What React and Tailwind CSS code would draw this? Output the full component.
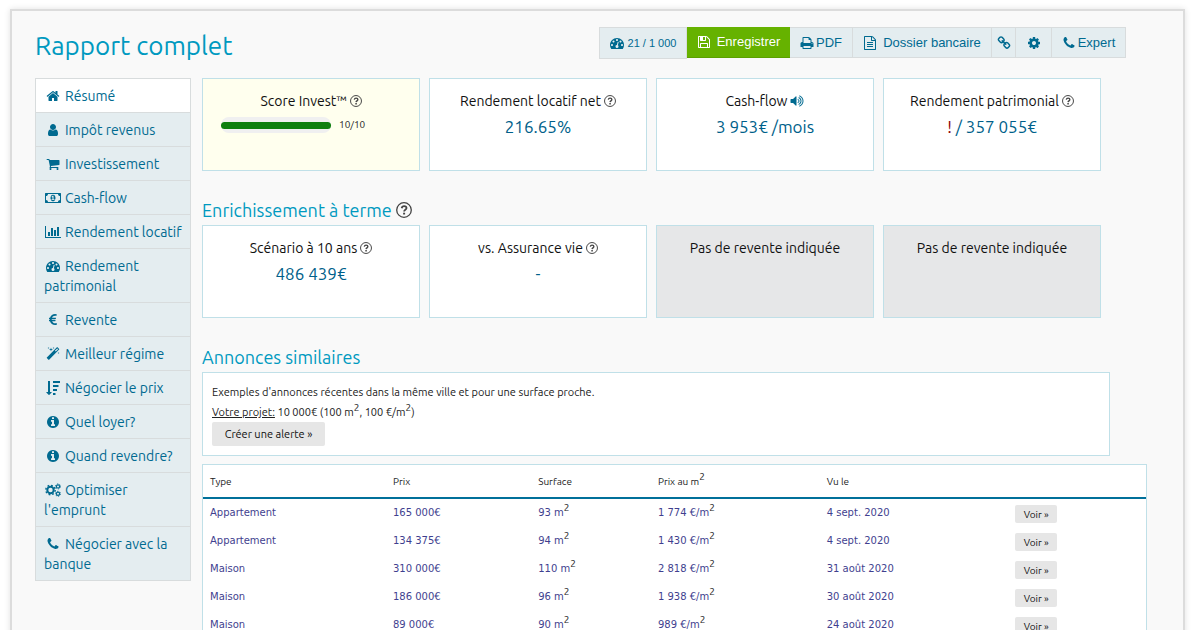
import React from 'react';

// Glyph outlines on a 1792 grid, w is the viewBox width
const ICONS = {
  home: {
    w: 1792,
    d: 'M1472 992v480q0 26-19 45t-45 19h-384v-384h-256v384h-384q-26 0-45-19t-19-45v-480q0-1 .5-3t.5-3l575-474 575 474q1 2 1 6zm223-69l-62 74q-8 9-21 11h-3q-13 0-21-7l-692-577-692 577q-12 8-24 7-13-2-21-11l-62-74q-8-10-7-23.5t11-21.5l719-599q32-26 76-26t76 26l244 204v-195q0-14 9-23t23-9h192q14 0 23 9t9 23v408l219 182q10 8 11 21.5t-7 23.5z'
  },
  user: {
    w: 1792,
    d: 'M1536 1399q0 109-62.5 187t-150.5 78h-854q-88 0-150.5-78t-62.5-187q0-85 8.5-160.5t31.5-152 58.5-131 94-89 134.5-34.5q131 128 313 128t313-128q76 0 134.5 34.5t94 89 58.5 131 31.5 152 8.5 160.5zm-256-887q0 159-112.5 271.5t-271.5 112.5-271.5-112.5-112.5-271.5 112.5-271.5 271.5-112.5 271.5 112.5 112.5 271.5z'
  },
  cart: {
    w: 1792,
    d: 'M704 1536q0 52-38 90t-90 38-90-38-38-90 38-90 90-38 90 38 38 90zm896 0q0 52-38 90t-90 38-90-38-38-90 38-90 90-38 90 38 38 90zm128-1088v512q0 24-16.5 42.5t-40.5 21.5l-1044 122q13 60 13 70 0 16-24 64h920q26 0 45 19t19 45-19 45-45 19h-1024q-26 0-45-19t-19-45q0-11 8-31.5t16-36 21.5-40 15.5-29.5l-177-823h-204q-26 0-45-19t-19-45 19-45 45-19h256q16 0 28.5 6.5t19.5 15.5 13 24.5 8 26 5.5 29.5 4.5 26h1201q26 0 45 19t19 45z'
  },
  money: {
    w: 2048,
    d: 'M832 1152h384v-96h-128v-448h-114l-148 137 77 80q42-37 55-57h2v288h-128v96zm512-256q0 70-21 142t-59.5 134-101.5 101-138 39-138-39-101.5-101-59.5-134-21-142 21-142 59.5-134 101.5-101 138-39 138 39 101.5 101 59.5 134 21 142zm576 256v-512q-106 0-181-75t-75-181h-1280q0 106-75 181t-181 75v512q106 0 181 75t75 181h1280q0-106 75-181t181-75zm128-832v1152q0 26-19 45t-45 19h-1920q-26 0-45-19t-19-45v-1152q0-26 19-45t45-19h1920q26 0 45 19t19 45z'
  },
  chart: {
    w: 2048,
    d: 'M640 896v512h-256v-512h256zm384-512v1024h-256v-1024h256zm1024 1152v128h-2048v-1536h128v1408h1920zm-640-896v768h-256v-768h256zm384-384v1152h-256v-1152h256z'
  },
  gauge: {
    w: 1792,
    d: 'M384 1152q0-53-37.5-90.5t-90.5-37.5-90.5 37.5-37.5 90.5 37.5 90.5 90.5 37.5 90.5-37.5 37.5-90.5zm192-448q0-53-37.5-90.5t-90.5-37.5-90.5 37.5-37.5 90.5 37.5 90.5 90.5 37.5 90.5-37.5 37.5-90.5zm428 481l101-382q6-26-7.5-48.5t-38.5-29.5-48 6.5-30 39.5l-101 382q-60 5-107 43.5t-63 98.5q-20 77 20 146t117 89 146-20 89-117q16-60-6-117t-72-91zm660-33q0-53-37.5-90.5t-90.5-37.5-90.5 37.5-37.5 90.5 37.5 90.5 90.5 37.5 90.5-37.5 37.5-90.5zm-640-640q0-53-37.5-90.5t-90.5-37.5-90.5 37.5-37.5 90.5 37.5 90.5 90.5 37.5 90.5-37.5 37.5-90.5zm448 192q0-53-37.5-90.5t-90.5-37.5-90.5 37.5-37.5 90.5 37.5 90.5 90.5 37.5 90.5-37.5 37.5-90.5zm320 448q0 261-141 483-19 29-54 29h-1402q-35 0-54-29-141-221-141-483 0-182 71-348t191-286 286-191 348-71 348 71 286 191 191 286 71 348z'
  },
  euro: {
    w: 1792,
    d: 'M1360 1307l35 159q3 12-3 22.5t-17 14.5l-5 1q-4 2-10.5 3.5t-16 4.5-21.5 5.5-25.5 5-30 5-33.5 4.5-36.5 3-38.5 1q-234 0-409-130.5t-238-351.5h-95q-13 0-22.5-9.5t-9.5-22.5v-113q0-13 9.5-22.5t22.5-9.5h66q-2-57 1-105h-67q-14 0-23-9t-9-23v-114q0-14 9-23t23-9h98q67-210 243.5-338t400.5-128q102 0 194 23 11 3 20 15 6 11 3 24l-43 159q-3 13-14 19.5t-24 2.5l-4-1q-4-1-11.5-2.5l-17.5-3.5-22.5-3.5-26-3-29-2.5-29.5-1q-126 0-226 64t-150 176h468q16 0 25 12 10 12 7 26l-24 114q-5 26-32 26h-488q-3 37 0 105h459q15 0 25 12 9 12 6 27l-24 112q-2 11-11 18.5t-20 7.5h-387q48 117 149.5 185.5t228.5 68.5q18 0 36-1.5t33.5-3.5 29.5-4.5 24.5-5 18.5-4.5l12-3 5-2q13-5 26 2 12 7 15 21z'
  },
  magic: {
    w: 1792,
    d: 'M1254 581l293-293-107-107-293 293zm447-293q0 27-18 45l-1286 1286q-18 18-45 18t-45-18l-198-198q-18-18-18-45t18-45l1286-1286q18-18 45-18t45 18l198 198q18 18 18 45zm-1351-190l98 30-98 30-30 98-30-98-98-30 98-30 30-98zm350 162l196 60-196 60-60 196-60-196-196-60 196-60 60-196zm930 478l98 30-98 30-30 98-30-98-98-30 98-30 30-98zm-640-640l98 30-98 30-30 98-30-98-98-30 98-30 30-98z'
  },
  sort: {
    w: 1792,
    d: 'M736 1440q0 12-10 24l-319 319q-10 9-23 9-12 0-23-9l-320-320q-15-16-7-35 8-20 30-20h192v-1376q0-14 9-23t23-9h192q14 0 23 9t9 23v1376h192q14 0 23 9t9 23zm480 128v192q0 14-9 23t-23 9h-256q-14 0-23-9t-9-23v-192q0-14 9-23t23-9h256q14 0 23 9t9 23zm192-512v192q0 14-9 23t-23 9h-448q-14 0-23-9t-9-23v-192q0-14 9-23t23-9h448q14 0 23 9t9 23zm192-512v192q0 14-9 23t-23 9h-640q-14 0-23-9t-9-23v-192q0-14 9-23t23-9h640q14 0 23 9t9 23zm192-512v192q0 14-9 23t-23 9h-832q-14 0-23-9t-9-23v-192q0-14 9-23t23-9h832q14 0 23 9t9 23z'
  },
  info: {
    w: 1792,
    d: 'M1152 1376v-160q0-14-9-23t-23-9h-96v-512q0-14-9-23t-23-9h-320q-14 0-23 9t-9 23v160q0 14 9 23t23 9h96v320h-96q-14 0-23 9t-9 23v160q0 14 9 23t23 9h448q14 0 23-9t9-23zm-128-896v-160q0-14-9-23t-23-9h-192q-14 0-23 9t-9 23v160q0 14 9 23t23 9h192q14 0 23-9t9-23zm640 416q0 209-103 385.5t-279.5 279.5-385.5 103-385.5-103-279.5-279.5-103-385.5 103-385.5 279.5-279.5 385.5-103 385.5 103 279.5 279.5 103 385.5z'
  },
  phone: {
    w: 1792,
    d: 'M1600 1240q0 27-10 70.5t-21 68.5q-21 50-122 106-94 51-186 51-27 0-53-3.5t-57.5-12.5-47-14.5-55.5-20.5-49-18q-98-35-175-83-127-79-264-216t-216-264q-48-77-83-175-3-9-18-49t-20.5-55.5-14.5-47-12.5-57.5-3.5-53q0-92 51-186 56-101 106-122 25-11 68.5-21t70.5-10q14 0 21 3 18 6 53 76 11 19 30 54t35 63.5 31 53.5q3 4 17.5 25t21.5 35.5 7 28.5q0 20-28.5 50t-62 55-62 53-28.5 46q0 9 5 22.5t8.5 20.5 14 24 11.5 19q76 137 174 235t235 174q2 1 19 11.5t24 14 20.5 8.5 22.5 5q18 0 46-28.5t53-62 55-62 50-28.5q14 0 28.5 7t35.5 21.5 25 17.5q25 15 53.5 31t63.5 35 54 30q70 35 76 53 3 7 3 21z'
  },
  save: {
    w: 1792,
    d: 'M512 1536h768v-384h-768v384zm896 0h128v-896q0-14-10-38.5t-20-34.5l-281-281q-10-10-34-20t-39-10v416q0 40-28 68t-68 28h-576q-40 0-68-28t-28-68v-416h-128v1280h128v-416q0-40 28-68t68-28h832q40 0 68 28t28 68v416zm-384-928v-320q0-13-9.5-22.5t-22.5-9.5h-192q-13 0-22.5 9.5t-9.5 22.5v320q0 13 9.5 22.5t22.5 9.5h192q13 0 22.5-9.5t9.5-22.5zm640 32v928q0 40-28 68t-68 28h-1344q-40 0-68-28t-28-68v-1344q0-40 28-68t68-28h928q40 0 88 20t76 48l280 280q28 28 48 76t20 88z'
  },
  print: {
    w: 1792,
    d: 'M448 1536h896v-256h-896v256zm0-640h896v-384h-160q-40 0-68-28t-28-68v-160h-640v640zm1152 64q0-26-19-45t-45-19-45 19-19 45 19 45 45 19 45-19 19-45zm128 0v416q0 13-9.5 22.5t-22.5 9.5h-224v160q0 40-28 68t-68 28h-960q-40 0-68-28t-28-68v-160h-224q-13 0-22.5-9.5t-9.5-22.5v-416q0-79 56.5-135.5t135.5-56.5h64v-544q0-40 28-68t68-28h672q40 0 88 20t76 48l152 152q28 28 48 76t20 88v256h64q79 0 135.5 56.5t56.5 135.5z'
  },
  file: {
    w: 1792,
    d: 'M1596 380q28 28 48 76t20 88v1152q0 40-28 68t-68 28h-1344q-40 0-68-28t-28-68v-1600q0-40 28-68t68-28h896q40 0 88 20t76 48zm-444-244v376h376q-10-29-22-41l-313-313q-12-12-41-22zm384 1528v-1024h-416q-40 0-68-28t-28-68v-416h-768v1536h1280zm-1024-864q0-14 9-23t23-9h704q14 0 23 9t9 23v64q0 14-9 23t-23 9h-704q-14 0-23-9t-9-23v-64zm736 224q14 0 23 9t9 23v64q0 14-9 23t-23 9h-704q-14 0-23-9t-9-23v-64q0-14 9-23t23-9h704zm0 256q14 0 23 9t9 23v64q0 14-9 23t-23 9h-704q-14 0-23-9t-9-23v-64q0-14 9-23t23-9h704z'
  },
  link: {
    w: 1792,
    d: 'M1520 1216q0-40-28-68l-208-208q-28-28-68-28-42 0-72 32 3 3 19 18.5t21.5 21.5 15 19 13 25.5 3.5 27.5q0 40-28 68t-68 28q-15 0-27.5-3.5t-25.5-13-19-15-21.5-21.5-18.5-19q-33 31-33 73 0 40 28 68l206 207q27 27 68 27 40 0 68-26l147-146q28-28 28-67zm-703-705q0-40-28-68l-206-207q-28-28-68-28-39 0-68 27l-147 146q-28 28-28 67 0 40 28 68l208 208q27 27 68 27 42 0 72-31-3-3-19-18.5t-21.5-21.5-15-19-13-25.5-3.5-27.5q0-40 28-68t68-28q15 0 27.5 3.5t25.5 13 19 15 21.5 21.5 18.5 19q33-31 33-73zm895 705q0 120-85 203l-147 146q-83 83-203 83-121 0-204-85l-206-207q-83-83-83-203 0-123 88-209l-88-88q-86 88-208 88-120 0-204-84l-208-208q-84-84-84-204t85-203l147-146q83-83 203-83 121 0 204 85l206 207q83 83 83 203 0 123-88 209l88 88q86-88 208-88 120 0 204 84l208 208q84 84 84 204z'
  },
  cog: {
    w: 1792,
    d: 'M1152 896q0-106-75-181t-181-75-181 75-75 181 75 181 181 75 181-75 75-181zm512-109v222q0 12-8 23t-20 13l-185 28q-19 54-39 91 35 50 107 138 10 12 10 25t-9 23q-27 37-99 108t-94 71q-12 0-26-9l-138-108q-44 23-91 38-16 136-29 186-7 28-36 28h-222q-14 0-24.5-8.5t-11.5-21.5l-28-184q-49-16-90-37l-141 107q-10 9-25 9-14 0-25-11-126-114-165-168-7-10-7-23 0-12 8-23 15-21 51-66.5t54-70.5q-27-50-41-99l-183-27q-13-2-21-12.5t-8-23.5v-222q0-12 8-23t19-13l186-28q14-46 39-92-40-57-107-138-10-12-10-24 0-10 9-23 26-36 98.5-107.5t94.5-71.5q13 0 26 10l138 107q44-23 91-38 16-136 29-186 7-28 36-28h222q14 0 24.5 8.5t11.5 21.5l28 184q49 16 90 37l142-107q9-9 24-9 13 0 25 10 129 119 165 170 7 8 7 22 0 12-8 23-15 21-51 66.5t-54 70.5q26 50 41 98l183 28q13 2 21 12.5t8 23.5z'
  },
  volume: {
    w: 1792,
    d: 'M832 352v1088q0 26-19 45t-45 19-45-19l-333-333h-262q-26 0-45-19t-19-45v-384q0-26 19-45t45-19h262l333-333q19-19 45-19t45 19 19 45zm384 544q0 76-42.5 141.5t-112.5 93.5q-10 5-25 5-26 0-45-18.5t-19-45.5q0-21 12-35.5t29-25 34-23 29-36 12-56.5-12-56.5-29-36-34-23-29-25-12-35.5q0-27 19-45.5t45-18.5q15 0 25 5 70 27 112.5 93t42.5 142zm256 0q0 153-85 282.5t-225 188.5q-13 5-25 5-27 0-46-19t-19-45q0-39 39-59 56-29 76-44 74-54 115.5-135.5t41.5-173.5-41.5-173.5-115.5-135.5q-20-15-76-44-39-20-39-59 0-26 19-45t45-19q13 0 26 5 140 59 225 188.5t85 282.5zm256 0q0 230-127 422.5t-338 283.5q-13 5-26 5-26 0-45-19t-19-45q0-36 39-59 7-4 22.5-10.5t22.5-10.5q46-25 82-51 123-91 192-227t69-289-69-289-192-227q-36-26-82-51-7-4-22.5-10.5t-22.5-10.5q-39-23-39-59 0-26 19-45t45-19q13 0 26 5 211 91 338 283.5t127 422.5z'
  }
};

function Icon({ name, className = 'h-[14px]' }) {
  if (name === 'cogs') {
    return (
      <svg viewBox="0 0 16 14" className={`${className} w-auto inline-block`} fill="none" stroke="currentColor" aria-hidden="true">
        <circle cx="5.5" cy="7" r="3.2" strokeWidth="2" />
        <circle cx="5.5" cy="7" r="4.7" strokeWidth="1.4" strokeDasharray="1.8 1.89" />
        <circle cx="13" cy="3.4" r="1.6" strokeWidth="1.2" />
        <circle cx="13" cy="3.4" r="2.5" strokeWidth="0.9" strokeDasharray="1.3 1.32" />
        <circle cx="13" cy="10.8" r="1.6" strokeWidth="1.2" />
        <circle cx="13" cy="10.8" r="2.5" strokeWidth="0.9" strokeDasharray="1.3 1.32" />
      </svg>
    );
  }

  const icon = ICONS[name];
  return (
    <svg viewBox={`0 0 ${icon.w} 1792`} className={`${className} w-auto inline-block`} fill="currentColor" aria-hidden="true">
      <path d={icon.d} />
    </svg>
  );
}

const menu = [
  { icon: 'home', label: 'Résumé', active: true },
  { icon: 'user', label: 'Impôt revenus' },
  { icon: 'cart', label: 'Investissement' },
  { icon: 'money', label: 'Cash-flow' },
  { icon: 'chart', label: 'Rendement locatif' },
  { icon: 'gauge', label: 'Rendement patrimonial' },
  { icon: 'euro', label: 'Revente' },
  { icon: 'magic', label: 'Meilleur régime' },
  { icon: 'sort', label: 'Négocier le prix' },
  { icon: 'info', label: 'Quel loyer?' },
  { icon: 'info', label: 'Quand revendre?' },
  { icon: 'cogs', label: "Optimiser l'emprunt" },
  { icon: 'phone', label: 'Négocier avec la banque' }
];

const listings = [
  { type: 'Appartement', price: '165 000€', area: '93', perMeter: '1 774', seen: '4 sept. 2020' },
  { type: 'Appartement', price: '134 375€', area: '94', perMeter: '1 430', seen: '4 sept. 2020' },
  { type: 'Maison', price: '310 000€', area: '110', perMeter: '2 818', seen: '31 août 2020' },
  { type: 'Maison', price: '186 000€', area: '96', perMeter: '1 938', seen: '30 août 2020' },
  { type: 'Maison', price: '89 000€', area: '90', perMeter: '989', seen: '24 août 2020' }
];

function Help({ className = 'w-3 h-3' }) {
  return (
    <svg viewBox="0 0 16 16" className={`${className} shrink-0 text-[#444]`} fill="none" stroke="currentColor" aria-hidden="true">
      <circle cx="8" cy="8" r="7.3" strokeWidth="1.3" />
      <path d="M5.7 6.2c.3-1.5 1.3-2.1 2.4-2.1 1.4 0 2.4.8 2.4 2 0 1.7-2.3 1.7-2.4 3.4" strokeWidth="1.8" />
      <path d="M8.1 10.7v1.8" strokeWidth="2" />
    </svg>
  );
}

function Card({ title, extra, tone = 'bg-white', children }) {
  return (
    <div className={`h-[93px] border border-[#c0e0e8] pt-3 text-center ${tone}`}>
      <h3 className="flex items-center justify-center gap-[3px] text-sm leading-5 text-[#111] whitespace-nowrap">
        {title}
        {extra}
      </h3>
      {children}
    </div>
  );
}

function Value({ children }) {
  return <p className="mt-1 text-[17px] leading-6 text-[#005f8a]">{children}</p>;
}

function Sup() {
  return <sup className="font-['Ubuntu','Noto_Sans',sans-serif] text-[10px] text-[#222]">2</sup>;
}

export default function App() {
  return (
    <div className="min-h-screen bg-white pt-[9px] pl-[10px] pr-[15px] font-['Ubuntu','Noto_Sans',sans-serif]">
      <div className="min-h-screen bg-[#f9f9f9] border-2 border-[#dcdcdc] shadow-[0_0_6px_rgba(0,0,0,0.12)] pt-4 pl-[23px] pr-[36px]">

        {/* Header */}
        <header className="flex items-start justify-between h-[51px]">
          <h1 className="text-[26px] leading-[38px] text-[#0099c0]">Rapport complet</h1>
          <div className="flex items-start mr-[21px] font-['Liberation_Sans',Arial,sans-serif] text-[13px] text-[#006a90]">
            <span className="flex items-center justify-center gap-1 w-[88px] h-8 bg-[#e4edf0] border border-[#d8dcdd] text-[11px]">
              <Icon name="gauge" />
              21 / 1 000
            </span>
            <button className="flex items-center justify-center gap-1.5 w-[103px] h-[31px] bg-[#66b200] border-b border-[#5ba000] text-white cursor-pointer">
              <Icon name="save" />
              Enregistrer
            </button>
            <button className="flex items-center justify-center gap-0.5 w-[63px] h-[31px] bg-[#e4edf0] border border-[#d8dcdd] border-l-0 cursor-pointer">
              <Icon name="print" />
              PDF
            </button>
            <button className="flex items-center justify-center gap-1.5 w-[139px] h-[31px] bg-[#e4edf0] border border-[#d8dcdd] border-l-0 cursor-pointer">
              <Icon name="file" />
              Dossier bancaire
            </button>
            <button aria-label="Lien" className="flex items-center justify-center w-6 h-[31px] bg-[#e4edf0] border border-[#d8dcdd] border-l-0 cursor-pointer">
              <Icon name="link" />
            </button>
            <button aria-label="Réglages" className="flex items-center justify-center w-9 h-[31px] bg-[#e4edf0] border border-[#d8dcdd] border-l-0 cursor-pointer">
              <Icon name="cog" />
            </button>
            <button className="flex items-center justify-center gap-0.5 w-[74px] h-[31px] bg-[#e4edf0] border border-[#d8dcdd] border-l-0 cursor-pointer">
              <Icon name="phone" />
              Expert
            </button>
          </div>
        </header>

        <div className="flex items-start gap-[11px]">

          {/* Sidebar */}
          <nav className="w-[156px] shrink-0 border border-b-0 border-[#d8dcdd]">
            {menu.map((item) => (
              <a
                key={item.label}
                href="#"
                className={`block pl-2 pr-1 pt-[7px] pb-1.5 text-sm leading-5 text-[#006a90] border-b border-[#d8dcdd] ${
                  item.active ? 'bg-white' : 'bg-[#e4edf0]'
                }`}
              >
                <span className="inline-flex w-[18px] h-[14px] justify-center align-[-2px] mr-[3px]">
                  <Icon name={item.icon} />
                </span>
                {item.label}
              </a>
            ))}
          </nav>

          {/* Report */}
          <main className="flex-1 min-w-0">
            <section className="grid grid-cols-4 gap-[9px] mr-[46px]">
              <Card title="Score Invest™" extra={<Help />} tone="bg-[#ffffee]">
                <div className="flex items-center mt-1.5 pl-[18px] gap-2">
                  <div className="flex items-center w-[110px] h-4 rounded-full bg-[#f0f0f0]">
                    <div className="w-full h-[7px] rounded-full bg-[#0e7f0e]"></div>
                  </div>
                  <span className="text-[10px] leading-4 text-[#222]">10/10</span>
                </div>
              </Card>
              <Card title="Rendement locatif net" extra={<Help />}>
                <Value>216.65%</Value>
              </Card>
              <Card title="Cash-flow" extra={<span className="flex text-[#006a90]"><Icon name="volume" /></span>}>
                <Value>3 953€ /mois</Value>
              </Card>
              <Card title="Rendement patrimonial" extra={<Help />}>
                <Value><span className="text-[#8b0000]">!</span> / 357 055€</Value>
              </Card>
            </section>

            <h2 className="flex items-center gap-1 mt-[25px] mb-px text-lg leading-7 text-[#0099c0]">
              Enrichissement à terme
              <Help className="w-4 h-4" />
            </h2>
            <section className="grid grid-cols-4 gap-[9px] mr-[46px]">
              <Card title="Scénario à 10 ans" extra={<Help />}>
                <Value>486 439€</Value>
              </Card>
              <Card title="vs. Assurance vie" extra={<Help />}>
                <Value>-</Value>
              </Card>
              <Card title="Pas de revente indiquée" tone="bg-[#e6e7e8]" />
              <Card title="Pas de revente indiquée" tone="bg-[#e6e7e8]" />
            </section>

            <h2 className="mt-[25px] mb-px text-lg leading-7 text-[#0099c0]">Annonces similaires</h2>
            <section className="mr-[37px] h-[84px] bg-white border border-[#c0e0e8] px-[9px] pt-[9px] text-[11px] leading-5 text-[#222]">
              <p>Exemples d'annonces récentes dans la même ville et pour une surface proche.</p>
              <p>
                <u>Votre projet:</u> 10 000€ (100 m<Sup />, 100 €/m<Sup />)
              </p>
              <button className="block w-[113px] h-6 bg-[#e6e6e6] rounded-xs text-[11px] text-[#111] cursor-pointer">
                Créer une alerte »
              </button>
            </section>

            <table className="w-full table-fixed mt-2 bg-white border border-[#c0e0e8] border-separate border-spacing-0 text-[10px] text-[#3f3f8f] text-left">
              <thead className="text-[#222]">
                <tr className="h-[34px]">
                  <th className="w-[19.4%] pl-[7px] font-normal border-b-2 border-[#00709a]">Type</th>
                  <th className="w-[15.4%] pl-[7px] font-normal border-b-2 border-[#00709a]">Prix</th>
                  <th className="w-[12.7%] pl-[7px] font-normal border-b-2 border-[#00709a]">Surface</th>
                  <th className="w-[17.9%] pl-[7px] font-normal border-b-2 border-[#00709a]">Prix au m<Sup /></th>
                  <th className="w-[20%] pl-[7px] font-normal border-b-2 border-[#00709a]">Vu le</th>
                  <th className="border-b-2 border-[#00709a]"></th>
                </tr>
              </thead>
              <tbody className="font-['DejaVu_Sans',sans-serif]">
                {listings.map((row, i) => (
                  <tr key={i} className="h-7">
                    <td className="pl-[7px] pb-0.5">{row.type}</td>
                    <td className="pl-[7px] pb-0.5">{row.price}</td>
                    <td className="pl-[7px] pb-0.5">{row.area} m<Sup /></td>
                    <td className="pl-[7px] pb-0.5">{row.perMeter} €/m<Sup /></td>
                    <td className="pl-[7px] pb-0.5">{row.seen}</td>
                    <td className="pl-[7px] align-bottom">
                      <button className="block w-[42px] h-[18px] mb-1 bg-[#e6e6e6] rounded-xs font-['Ubuntu','Noto_Sans',sans-serif] text-[10px] text-[#111] cursor-pointer">
                        Voir »
                      </button>
                    </td>
                  </tr>
                ))}
              </tbody>
            </table>
          </main>
        </div>
      </div>
    </div>
  );
}
